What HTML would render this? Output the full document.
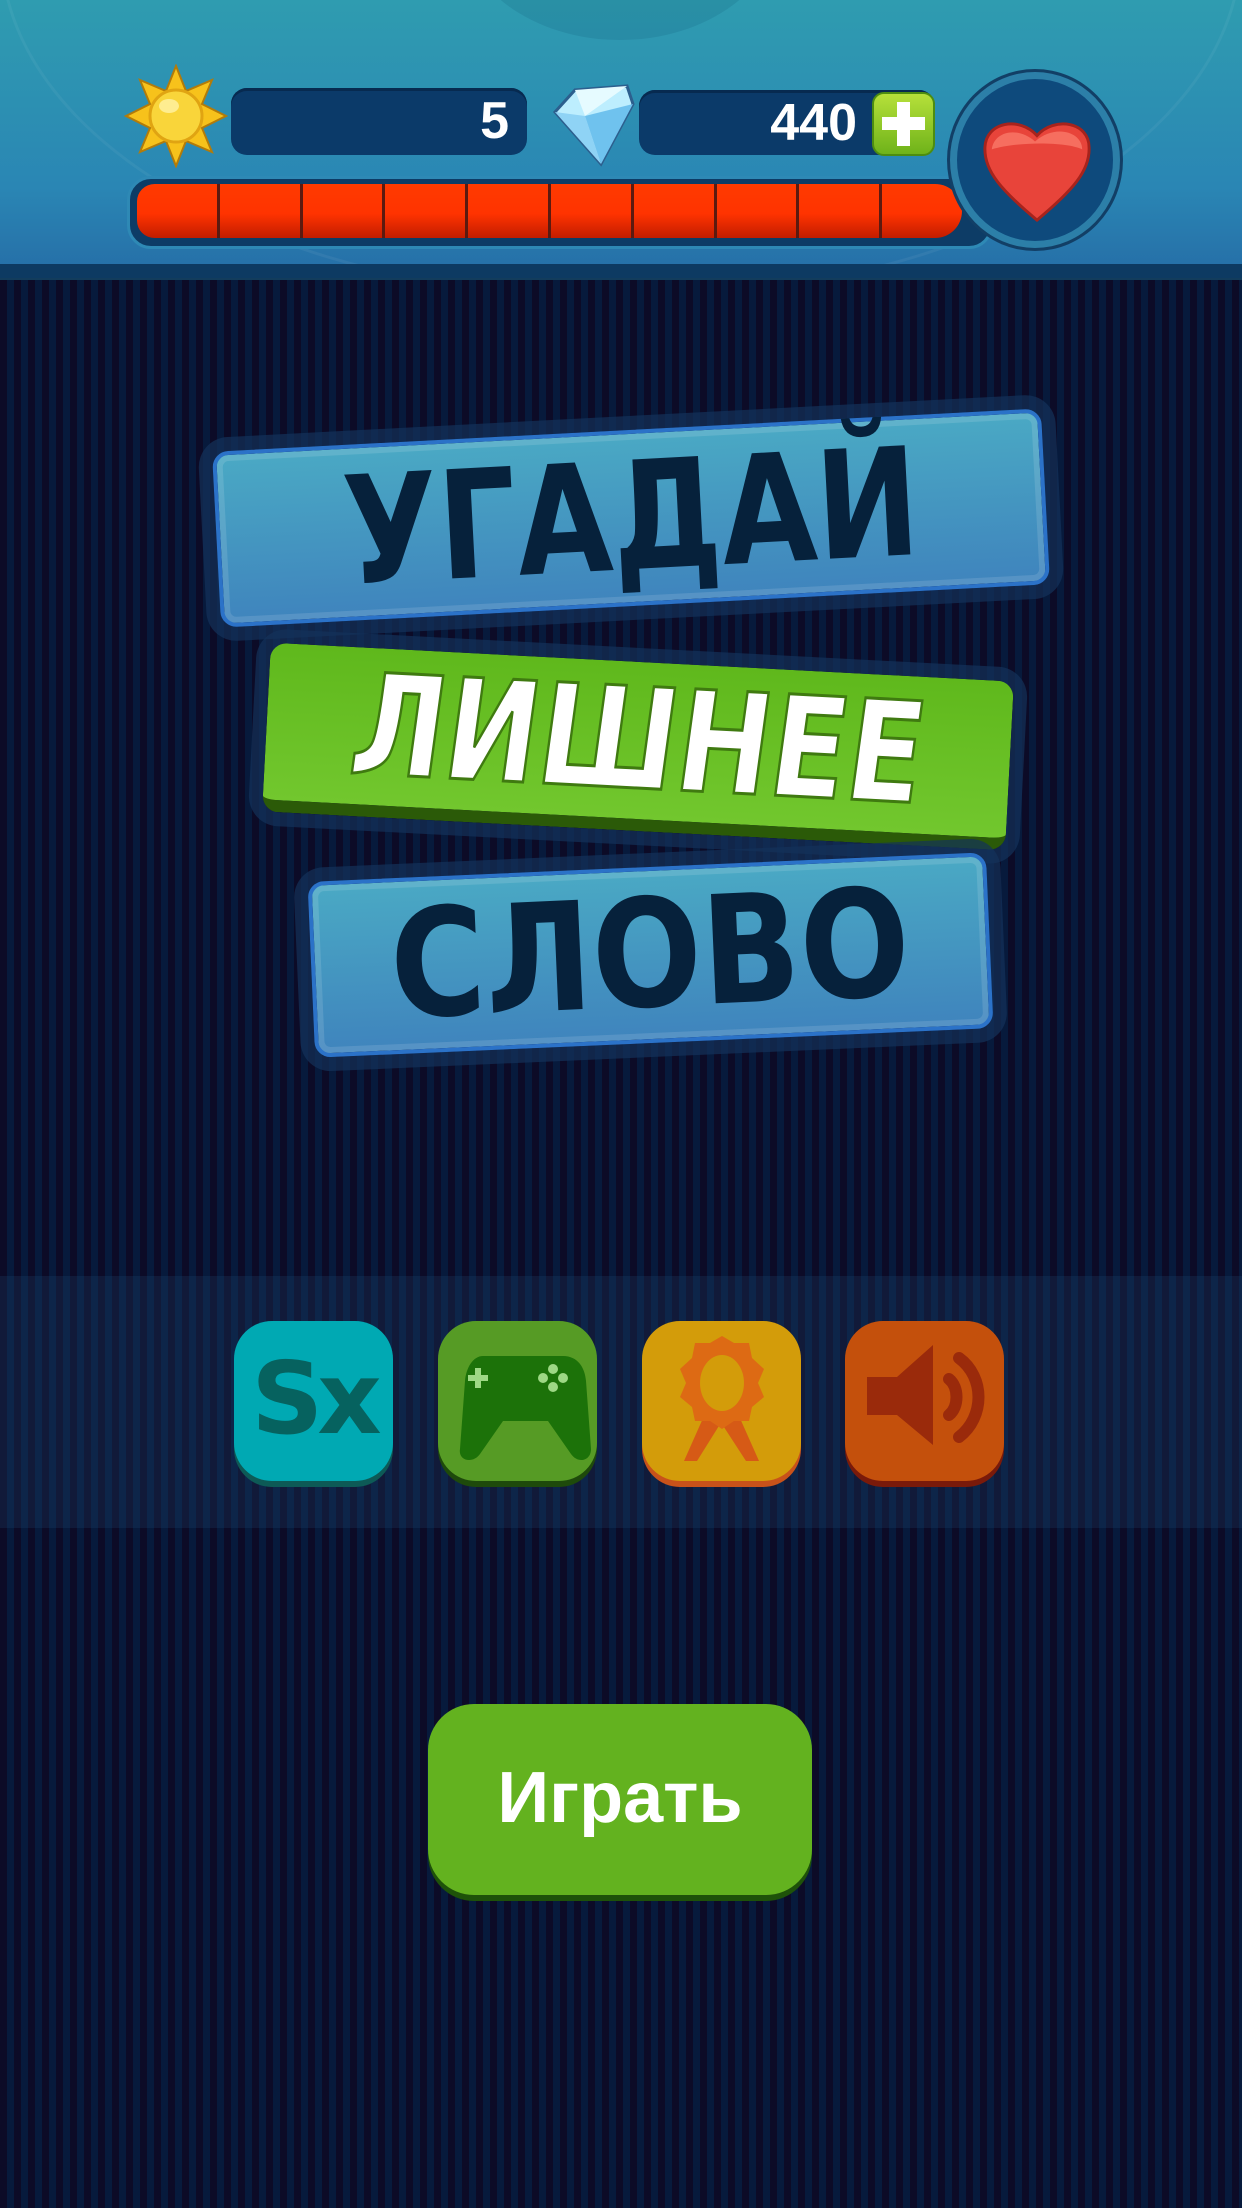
<!DOCTYPE html>
<html><head><meta charset="utf-8"><style>
*{margin:0;padding:0;box-sizing:border-box}
body{width:1242px;height:2208px;overflow:hidden;position:relative;font-family:"Liberation Sans","DejaVu Sans",sans-serif;
background:repeating-linear-gradient(90deg,#0c0b27 0 7px,#071a3c 7px 14px)}
.abs{position:absolute}
.hdr{left:0;top:0;width:1242px;height:268px;background:linear-gradient(#2f9cb0,#2a86b4 70%,#2670a8);overflow:hidden}
.band{left:0;top:264px;width:1242px;height:16px;background:#0d3a62;border-bottom:2px solid #123c5c}
.box{background:#0b3a69;border-radius:16px;box-shadow:inset 0 3px 0 #072a50}
.num{color:#fff;font-weight:bold;font-size:52px;text-align:right;line-height:66px}
.logo{display:flex;align-items:center;justify-content:center;font-weight:900;font-family:"DejaVu Sans","Liberation Sans",sans-serif}
.b1{background:linear-gradient(#4aa9c4,#3f84bd);border:4px solid #2b72c8;border-radius:16px;box-shadow:0 0 0 14px rgba(20,50,90,.7),inset 0 0 0 6px rgba(255,255,255,.12);color:#06213b}
.ico{width:159px;height:160px;border-radius:38px;top:1321px}
</style></head><body>
<div class="abs hdr">
 <div class="abs" style="left:0;top:-400px;width:1242px;height:700px;border-radius:50%;border:3px solid rgba(255,255,255,.05)"></div>
 <div class="abs" style="left:460px;top:-200px;width:320px;height:240px;border-radius:50%;background:rgba(0,60,90,.12)"></div>
</div>
<div class="abs band"></div>
<svg class="abs" style="left:124px;top:64px" width="104" height="104" viewBox="0 0 104 104">
<polygon points="52,2 62,27 88,16 78,40 102,52 78,64 88,88 62,77 52,102 42,77 16,88 26,64 2,52 26,40 16,16 42,27" fill="#f7c21b" stroke="#b27b0a" stroke-width="2"/>
<circle cx="52" cy="52" r="26" fill="#f9d53a" stroke="#e0a412" stroke-width="3"/>
<ellipse cx="45" cy="42" rx="10" ry="7" fill="#fff3a6" opacity=".8"/>
</svg>
<div class="abs box num" style="left:231px;top:88px;width:296px;height:67px;padding-right:18px">5</div>
<svg class="abs" style="left:545px;top:76px" width="92" height="92" viewBox="0 0 92 92">
<polygon points="10,36 30,14 82,10 88,28 56,88" fill="#bdeefe" stroke="#2c5f8e" stroke-width="3"/>
<polygon points="10,36 56,88 40,40" fill="#8fd3f5"/>
<polygon points="30,14 40,40 82,10" fill="#e6fbff"/>
<polygon points="40,40 88,28 56,88" fill="#6fc2ee"/>
</svg>
<div class="abs box num" style="left:639px;top:90px;width:296px;height:65px;padding-right:78px">440</div>
<div class="abs" style="left:872px;top:92px;width:63px;height:64px;border-radius:12px;background:linear-gradient(#b6e03a,#6fb31a);border:2px solid #4d8d10"></div>
<div class="abs" style="left:897px;top:102px;width:13px;height:44px;background:#fff"></div>
<div class="abs" style="left:882px;top:117px;width:43px;height:13px;background:#fff"></div>
<div class="abs" style="left:127px;top:176px;width:866px;height:73px;border-radius:24px;background:#0d3c66;border:3px solid #2e89b5"></div>
<div class="abs" style="left:137px;top:184px;width:825px;height:54px;border-radius:22px 34px 34px 22px;background:linear-gradient(#ff3a00,#ff3300 55%,#c21d00);overflow:hidden;display:flex">
 <div style="flex:1;border-right:3px solid #5b1a10"></div><div style="flex:1;border-right:3px solid #5b1a10"></div><div style="flex:1;border-right:3px solid #5b1a10"></div><div style="flex:1;border-right:3px solid #5b1a10"></div><div style="flex:1;border-right:3px solid #5b1a10"></div><div style="flex:1;border-right:3px solid #5b1a10"></div><div style="flex:1;border-right:3px solid #5b1a10"></div><div style="flex:1;border-right:3px solid #5b1a10"></div><div style="flex:1;border-right:3px solid #5b1a10"></div><div style="flex:1"></div>
</div>
<div class="abs" style="left:950px;top:72px;width:170px;height:176px;border-radius:50%;background:#0e4a7c;border:7px solid #2c7fa8;box-shadow:0 0 0 3px #123f66"></div>
<svg class="abs" style="left:978px;top:112px" width="118" height="112" viewBox="0 0 120 114">
<path d="M60 110 C24 80 6 60 7 36 C8 10 42 4 60 24 C78 4 113 10 113 36 C114 60 96 80 60 110Z" fill="#e8443a" stroke="#a8231c" stroke-width="3"/>
<path d="M14 38 C16 20 40 14 58 30 C78 12 106 20 106 38 C90 30 40 30 14 38Z" fill="#ff8a78" opacity=".6"/>
</svg>
<div class="abs logo b1" style="left:216px;top:430px;width:830px;height:176px;transform:rotate(-3deg);font-size:150px"><span style="transform:scaleX(.82)">УГАДАЙ</span></div>
<div class="abs logo" style="left:266px;top:662px;width:744px;height:169px;transform:rotate(3deg);background:linear-gradient(#5fb81c,#72c72e);border-radius:16px;border-bottom:12px solid #2b5a08;box-shadow:0 0 0 14px rgba(20,50,90,.7);color:#fff;font-size:140px;-webkit-text-stroke:3px #3f7a10"><span style="transform:scaleX(.8) skewX(-6deg)">ЛИШНЕЕ</span></div>
<div class="abs logo b1" style="left:311px;top:867px;width:679px;height:176px;transform:rotate(-2.5deg);font-size:150px"><span style="transform:scaleX(.86)">СЛОВО</span></div>
<div class="abs" style="left:0;top:1276px;width:1242px;height:252px;background:rgba(30,70,110,.25)"></div>
<div class="abs ico" style="left:234px;background:#00a9b3;box-shadow:0 6px 0 #0d5a56"></div>
<div class="abs" style="left:234px;top:1340px;width:159px;text-align:center;font-size:100px;font-weight:900;color:#06625f;font-family:'DejaVu Sans',sans-serif;letter-spacing:-6px">Sx</div>
<div class="abs ico" style="left:438px;background:#569b25;box-shadow:0 6px 0 #1e4a0b"></div>
<svg class="abs" style="left:438px;top:1321px" width="159" height="160" viewBox="0 0 159 160">
<path d="M45 35 H125 C140 35 147 47 148 60 L153 128 C153 140 140 143 133 133 L110 100 H65 L42 133 C35 143 20 140 22 128 L27 60 C28 47 35 35 45 35Z" fill="#1c7209"/>
<rect x="30" y="54" width="20" height="6" fill="#9ed885"/><rect x="37" y="47" width="6" height="20" fill="#9ed885"/>
<circle cx="115" cy="48" r="5" fill="#9ed885"/><circle cx="105" cy="57" r="5" fill="#9ed885"/><circle cx="125" cy="57" r="5" fill="#9ed885"/><circle cx="115" cy="66" r="5" fill="#9ed885"/>
</svg>
<div class="abs ico" style="left:642px;background:#d39c0a;box-shadow:0 6px 0 #c8521a"></div>
<svg class="abs" style="left:642px;top:1321px" width="159" height="160" viewBox="0 0 159 160">
<path d="M62 95 L42 140 L55 140 L80 100Z M97 95 L117 140 L104 140 L78 100Z" fill="#d65a16"/>
<polygon points="80,15 92,22 107,22 110,37 122,48 116,62 122,76 110,86 107,100 92,100 80,108 68,100 53,100 50,86 38,76 44,62 38,48 50,37 53,22 68,22" fill="#dd6a14"/>
<ellipse cx="80" cy="62" rx="22" ry="28" fill="#d39c0a"/>
</svg>
<div class="abs ico" style="left:845px;background:#c4500c;box-shadow:0 6px 0 #7a1a0a"></div>
<svg class="abs" style="left:845px;top:1321px" width="159" height="160" viewBox="0 0 159 160">
<path d="M22 56 H52 L88 24 V124 L52 94 H22Z" fill="#9a2a0b"/>
<path d="M104 58 C114 66 114 86 104 94" stroke="#9a2a0b" stroke-width="12" fill="none" stroke-linecap="round"/>
<path d="M114 37 C140 56 140 96 114 116" stroke="#9a2a0b" stroke-width="12" fill="none" stroke-linecap="round"/>
</svg>
<div class="abs" style="left:428px;top:1704px;width:384px;height:191px;border-radius:46px;background:#63b21f;box-shadow:0 6px 0 #1e5209;color:#fff;font-weight:bold;font-size:72px;text-align:center;line-height:188px">Играть</div>
</body></html>
